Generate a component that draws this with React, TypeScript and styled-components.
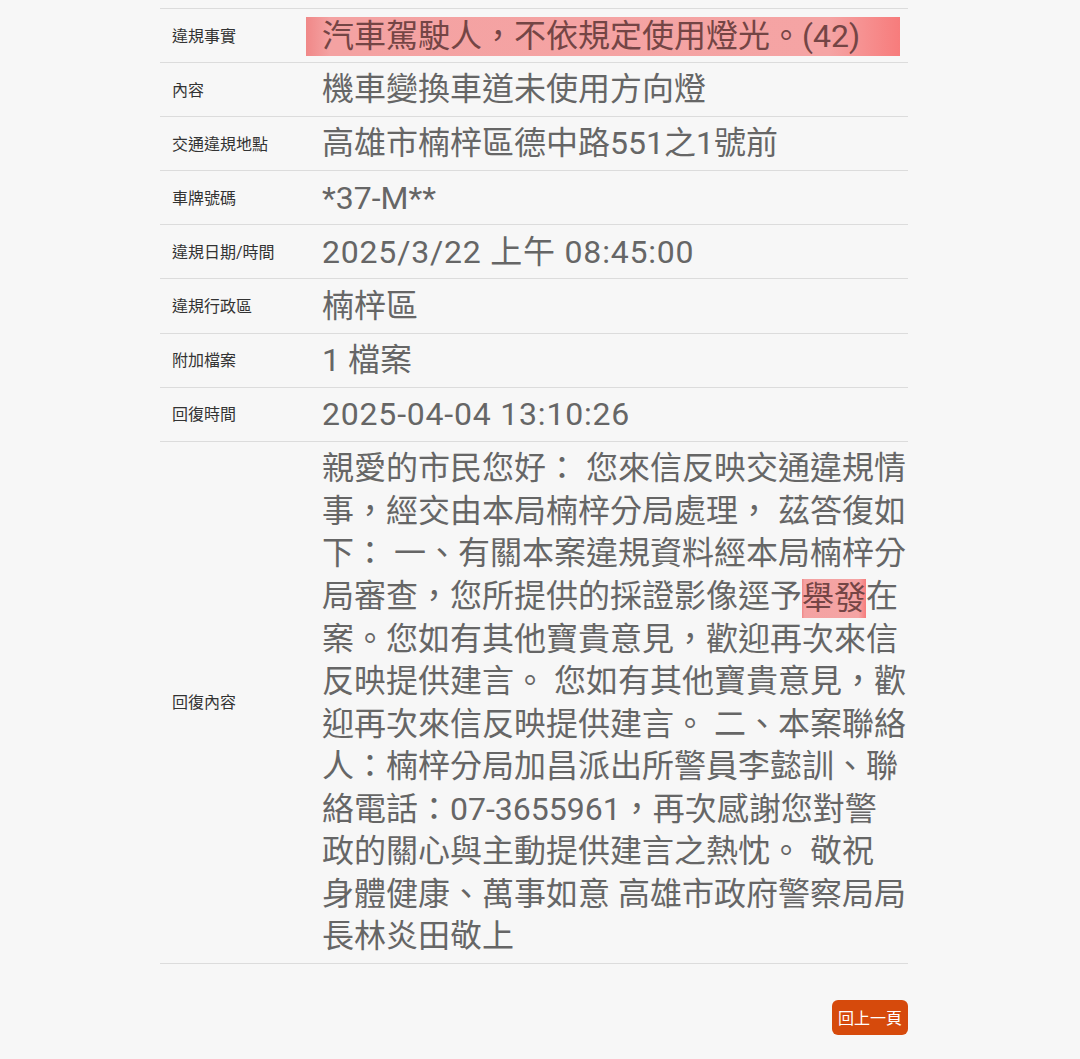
import React from "react";
import styled, { createGlobalStyle } from "styled-components";

const Global = createGlobalStyle`
  html, body { margin: 0; padding: 0; background: #f7f7f7; }
  body { font-family: Roboto, "Noto Sans CJK TC", sans-serif; }
`;

const Page = styled.div`
  width: 1080px;
  min-height: 1059px;
  box-sizing: border-box;
  padding: 8px 172px 0 160px;
  background: #f7f7f7;
`;

const Table = styled.div`
  display: grid;
  grid-template-columns: 150px 1fr;
  border-top: 1px solid #dcdcdc;
`;

const Label = styled.div`
  display: flex;
  align-items: center;
  padding: 0 0 2px 12px;
  font-size: 16px;
  color: #333;
  border-bottom: 1px solid #dcdcdc;
`;

const Value = styled.div<{ $spaced?: boolean }>`
  padding: 5.3px 0 5.3px 12px;
  font-size: 32px;
  line-height: 42.5px;
  color: #666;
  letter-spacing: ${(p) => (p.$spaced ? "0.8px" : "0")};
  border-bottom: 1px solid #dcdcdc;
  word-break: normal;
  overflow-wrap: anywhere;
`;

const Mark = styled.span<{ $wide?: boolean }>`
  background: linear-gradient(
    to right,
    #f08888 0%,
    #f4a2a2 4%,
    #f5a4a4 88%,
    #f77c7c 100%
  );
  color: #744545;
  padding: ${(p) => (p.$wide ? "0 40px 0 16px" : "0")};
  margin-left: ${(p) => (p.$wide ? "-16px" : "0")};
  display: inline-block;
  line-height: 39px;
  vertical-align: ${(p) => (p.$wide ? "-1px" : "-2px")};
`;

const Footer = styled.div`
  display: flex;
  justify-content: flex-end;
  padding-top: 36px;
`;

const BackButton = styled.button`
  font-family: Roboto, "Noto Sans CJK TC", sans-serif;
  font-size: 16px;
  color: #fff;
  background: #d64a0c;
  border: none;
  border-radius: 6px;
  height: 35px;
  padding: 0 6px;
  cursor: pointer;
`;

const rows: { label: string; value: string; spaced?: boolean }[] = [
  { label: "內容", value: "機車變換車道未使用方向燈" },
  { label: "交通違規地點", value: "高雄市楠梓區德中路551之1號前" },
  { label: "車牌號碼", value: "*37-M**" },
  { label: "違規日期/時間", value: "2025/3/22 上午 08:45:00", spaced: true },
  { label: "違規行政區", value: "楠梓區" },
  { label: "附加檔案", value: "1 檔案" },
  { label: "回復時間", value: "2025-04-04 13:10:26", spaced: true },
];

export default function App() {
  return (
    <Page>
      <Global />
      <Table>
        <Label>違規事實</Label>
        <Value>
          <Mark $wide>汽車駕駛人，不依規定使用燈光。(42)</Mark>
        </Value>
        {rows.map((r) => (
          <React.Fragment key={r.label}>
            <Label>{r.label}</Label>
            <Value $spaced={r.spaced}>{r.value}</Value>
          </React.Fragment>
        ))}
        <Label>回復內容</Label>
        <Value>
          親愛的市民您好： 您來信反映交通違規情事，經交由本局楠梓分局處理， 茲答復如下： 一、有關本案違規資料經本局楠梓分局審查，您所提供的採證影像逕予
          <Mark>舉發</Mark>
          在案。您如有其他寶貴意見，歡迎再次來信反映提供建言。 您如有其他寶貴意見，歡迎再次來信反映提供建言。 二、本案聯絡人：楠梓分局加昌派出所警員李懿訓、聯絡電話：07-3655961，再次感謝您對警政的關心與主動提供建言之熱忱。 敬祝 身體健康、萬事如意 高雄市政府警察局局長林炎田敬上
        </Value>
      </Table>
      <Footer>
        <BackButton>回上一頁</BackButton>
      </Footer>
    </Page>
  );
}
